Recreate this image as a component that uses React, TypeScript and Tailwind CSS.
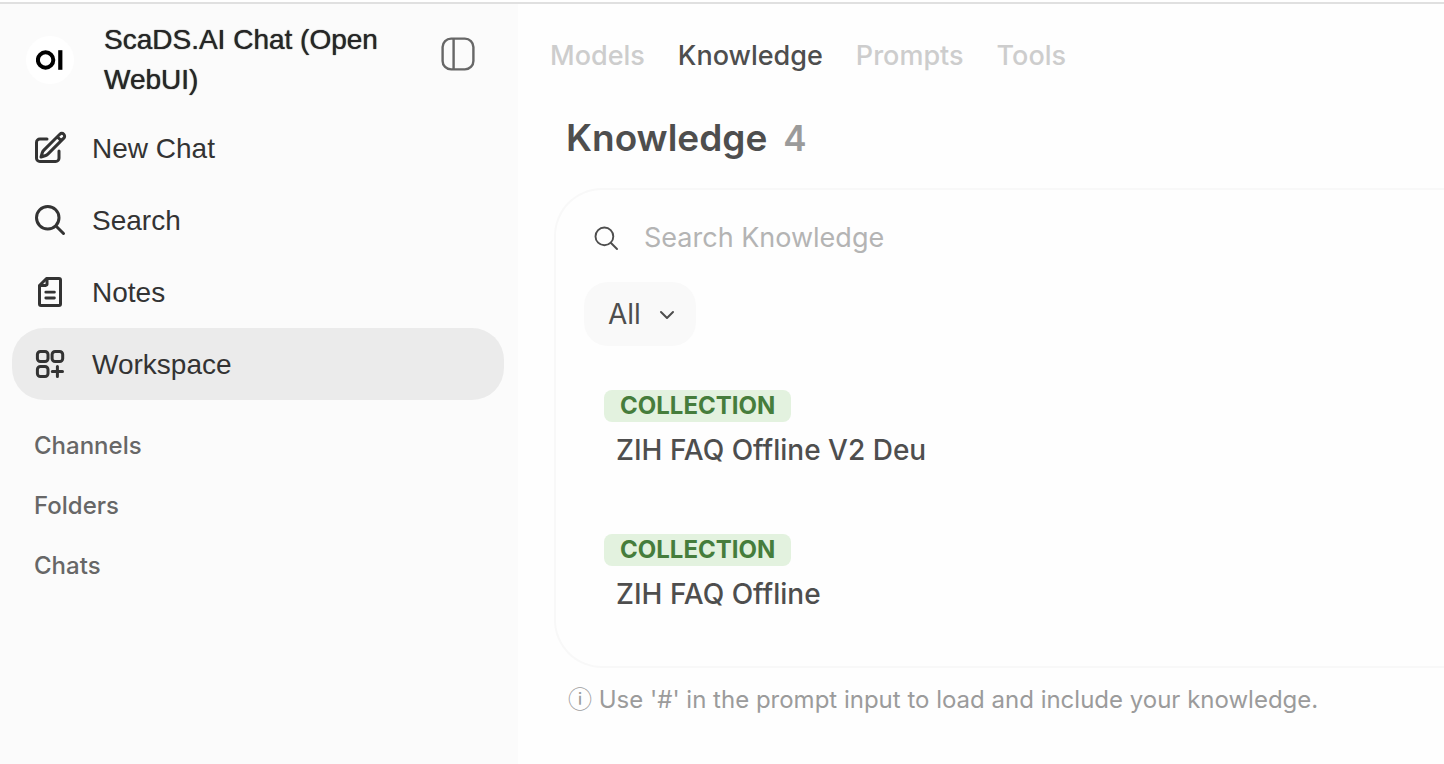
import type { ReactNode } from 'react';

function Icon({ children, strokeWidth = 2, box = 24 }: { children: ReactNode; strokeWidth?: number; box?: number }) {
  return (
    <svg
      className="size-9 shrink-0"
      viewBox={`0 0 ${box} ${box}`}
      fill="none"
      stroke="currentColor"
      strokeWidth={strokeWidth}
      strokeLinecap="round"
      strokeLinejoin="round"
      aria-hidden="true"
    >
      {children}
    </svg>
  );
}

const navItems = [
  {
    label: 'New Chat',
    icon: (
      <Icon>
        <path d="m16.862 4.487 1.687-1.688a1.875 1.875 0 1 1 2.652 2.652L10.582 16.07a4.5 4.5 0 0 1-1.897 1.13L6 18l.8-2.685a4.5 4.5 0 0 1 1.13-1.897l8.932-8.931Zm0 0L19.5 7.125M18 14v4.75A2.25 2.25 0 0 1 15.75 21H5.25A2.25 2.25 0 0 1 3 18.75V8.25A2.25 2.25 0 0 1 5.25 6H10" />
      </Icon>
    ),
  },
  {
    label: 'Search',
    icon: (
      <Icon>
        <path d="m21 21-5.197-5.197m0 0A7.5 7.5 0 1 0 5.196 5.196a7.5 7.5 0 0 0 10.607 10.607Z" />
      </Icon>
    ),
  },
  {
    label: 'Notes',
    icon: (
      <Icon box={36} strokeWidth={3}>
        <path d="M14.5 4.5H27a1.5 1.5 0 0 1 1.5 1.5V30a1.5 1.5 0 0 1-1.5 1.5H9A1.5 1.5 0 0 1 7.5 30V11.5Z" />
        <path d="M15 5V10.2a1.2 1.2 0 0 1-1.2 1.2H8" />
        <path d="M13.8 18.2h8.6M13.8 24h8.6" strokeWidth={2.8} />
      </Icon>
    ),
  },
  {
    label: 'Workspace',
    active: true,
    icon: (
      <Icon box={36} strokeWidth={3}>
        <rect x="5.4" y="5.4" width="10.6" height="10.2" rx="3" />
        <rect x="20.1" y="5.4" width="10.6" height="10.2" rx="3" />
        <rect x="5.4" y="20.4" width="10.6" height="10.2" rx="3" />
        <path d="M25.4 20.6v9.8M20.3 25.4h10.2" />
      </Icon>
    ),
  },
];

const sections = ['Channels', 'Folders', 'Chats'];

const tabs = [
  { label: 'Models' },
  { label: 'Knowledge', active: true },
  { label: 'Prompts' },
  { label: 'Tools' },
];

const collections = ['ZIH FAQ Offline V2 Deu', 'ZIH FAQ Offline'];

function Sidebar() {
  return (
    <aside className="w-[518px] shrink-0 bg-[#fbfbfb]">
      <div className="flex items-start pt-4 pr-[42px] pb-3 pl-[26px]">
        <div className="mt-4 flex size-12 shrink-0 items-center justify-center rounded-full bg-white">
          <svg viewBox="0 0 28 20" className="h-5 w-7" role="img" aria-label="Open WebUI">
            <circle cx="9.6" cy="10" r="7.7" fill="none" stroke="#000" strokeWidth="4" />
            <rect x="22.2" y="0.2" width="4.2" height="19.6" fill="#000" />
          </svg>
        </div>
        <div className="ml-[30px] flex-1 font-['Liberation_Sans',Arial,sans-serif] text-[28px] leading-10 text-[#262626] [text-shadow:0_0_1px_#262626]">
          ScaDS.AI Chat (Open WebUI)
        </div>
        <button type="button" aria-label="Toggle sidebar" className="mt-4 shrink-0 text-[#676767]">
          <svg className="size-9" viewBox="0 0 36 36" fill="none" stroke="currentColor" strokeWidth="2.4" aria-hidden="true">
            <rect x="2.6" y="2.6" width="30.8" height="30.8" rx="8.5" />
            <path d="M13.6 2.6v30.8" />
          </svg>
        </button>
      </div>
      <nav className="flex flex-col pr-3.5 pl-3 font-['Liberation_Sans',Arial,sans-serif] text-[28px] text-[#333]">
        {navItems.map((item) => (
          <a
            key={item.label}
            href="#"
            className={`flex h-18 items-center gap-6 rounded-[32px] px-5 ${item.active ? 'bg-[#ebebeb]' : ''}`}
          >
            {item.icon}
            <span className="pt-0.5">{item.label}</span>
          </a>
        ))}
      </nav>
      <div className="flex flex-col items-start px-[34px] pt-4 text-2xl font-medium text-[#676767]">
        {sections.map((name) => (
          <button key={name} type="button" className="h-15">
            {name}
          </button>
        ))}
      </div>
    </aside>
  );
}

export default function App() {
  return (
    <div className="flex min-h-screen flex-col overflow-hidden bg-white font-['Inter','Noto_Sans_CJK_SC',sans-serif] text-[#4e4e4e]">
      <div className="mt-0.5 h-0.5 bg-[#e0e0e0]" />
      <div className="flex flex-1">
        <Sidebar />
        <main className="min-w-0 flex-1 bg-[#fefefe] pl-8">
          <nav className="flex h-[104px] items-center gap-[33px] text-[27px] font-medium">
            {tabs.map((tab) => (
              <a key={tab.label} href="#" className={tab.active ? 'text-[#4e4e4e]' : 'text-[#cdcdcd]'}>
                {tab.label}
              </a>
            ))}
          </nav>
          <h1 className="flex h-15 items-center gap-4 pl-4 text-[37px] font-semibold">
            Knowledge
            <span className="text-[35px] text-[#9b9b9b]">4</span>
          </h1>
          <section className="mt-5 ml-1 h-[480px] rounded-l-[48px] border-2 border-r-0 border-[#f8f8f8] pl-7">
            <label className="flex h-24 items-center pl-2.5">
              <svg
                className="size-6 shrink-0"
                viewBox="0 0 24 24"
                fill="none"
                stroke="currentColor"
                strokeWidth="1.9"
                strokeLinecap="round"
                aria-hidden="true"
              >
                <circle cx="10.4" cy="10.4" r="8.9" />
                <path d="m17 17 6 6" />
              </svg>
              <input
                type="search"
                aria-label="Search Knowledge"
                placeholder="Search Knowledge"
                className="ml-[26px] min-w-0 flex-1 text-[27px] outline-none placeholder:text-[#b4b4b4]"
              />
            </label>
            <div className="relative mt-[-4px] h-16 w-28">
              <select
                aria-label="Filter"
                className="h-16 w-28 appearance-none rounded-3xl bg-[#f9f9f9] pl-6 text-[28px] outline-none"
              >
                <option>All</option>
              </select>
              <svg
                className="pointer-events-none absolute top-6 right-5 size-4.5"
                viewBox="0 0 18 18"
                fill="none"
                stroke="currentColor"
                strokeWidth="2"
                strokeLinecap="round"
                strokeLinejoin="round"
                aria-hidden="true"
              >
                <path d="m3 6 6 6 6-6" />
              </svg>
            </div>
            <ul className="mt-11 flex flex-col gap-15 pl-5">
              {collections.map((name) => (
                <li key={name} className="flex h-21 flex-col items-start gap-2">
                  <span className="rounded-lg bg-[#e3f2df] px-4 text-2xl leading-8 font-bold text-[#467d3c]">
                    COLLECTION
                  </span>
                  <a href="#" className="pl-3 text-[28px] leading-10 font-medium">
                    {name}
                  </a>
                </li>
              ))}
            </ul>
          </section>
          <p className="mt-3.5 pl-[18px] text-2xl leading-9 whitespace-nowrap text-[#9b9b9b]">
            ⓘ Use '#' in the prompt input to load and include your knowledge.
          </p>
        </main>
      </div>
    </div>
  );
}
